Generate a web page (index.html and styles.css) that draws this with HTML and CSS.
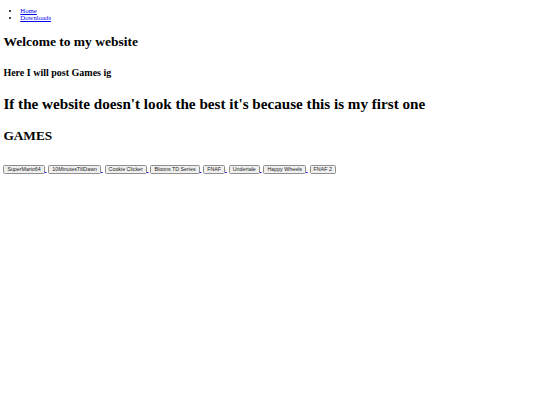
FILE: index.html
```html
<!DOCTYPE html>
<html lang="en">
<head>
    <meta charset="UTF-8">
    <meta name="viewport" content="width=device-width, initial-scale=1.0">
    <title>My Website</title>
    <link rel="stylesheet" href="styles.css">
</head>
<body>
    <ul class="nav">
        <li><a href="#">Home</a></li>
        <li><a href="#">Downloads</a></li>
    </ul>

    <h1 class="title">Welcome to my website</h1>
    <h3 class="subtitle">Here I will post Games ig</h3>
    <h1 class="note">If the website doesn't look the best it's because this is my first one</h1>
    <h2 class="section">GAMES</h2>

    <div class="games">
        <a class="game" href="#"><button class="game-btn">SuperMario64</button> </a>
        <a class="game" href="#"><button class="game-btn">10MinutesTillDawn</button> </a>
        <a class="game" href="#"><button class="game-btn">Cookie Clicker</button> </a>
        <a class="game" href="#"><button class="game-btn">Bloons TD Series</button> </a>
        <a class="game" href="#"><button class="game-btn">FNAF</button> </a>
        <a class="game" href="#"><button class="game-btn">Undertale</button> </a>
        <a class="game" href="#"><button class="game-btn">Happy Wheels</button> </a>
        <a class="game" href="#"><button class="game-btn">FNAF 2</button></a>
    </div>
</body>
</html>
```

FILE: styles.css
```css
body {
    font-family: 'Liberation Serif', 'Times New Roman', serif;
    font-size: 6.75px;
    color: #000;
    background-color: #fff;
    margin: 0;
    padding: 0 3.4px;
}
a {
    color: #0000ee;
}
.nav {
    margin: 6.75px 0 0;
    padding-left: 16.9px;
}
.title,
.subtitle,
.note,
.section {
    font-weight: bold;
    margin-bottom: 0;
}
.title {
    font-size: 13.5px;
    margin-top: 13.5px;
}
.subtitle {
    font-size: 10px;
    margin-top: 16.9px;
}
.note {
    font-size: 15.15px;
    margin-top: 16.6px;
}
.section {
    font-size: 13.3px;
    margin-top: 15.5px;
}
.games {
    margin-top: 20.3px;
}
.game {
    margin-right: 2px;
}
.game-btn {
    font-family: 'Liberation Sans', Arial, sans-serif;
    font-size: 5.3px;
    color: #222;
    background-color: #efefef;
    border: 1px solid #8f8f8f;
    border-radius: 1.5px;
    padding: 0.7px 3px;
    margin: 0;
}
```
